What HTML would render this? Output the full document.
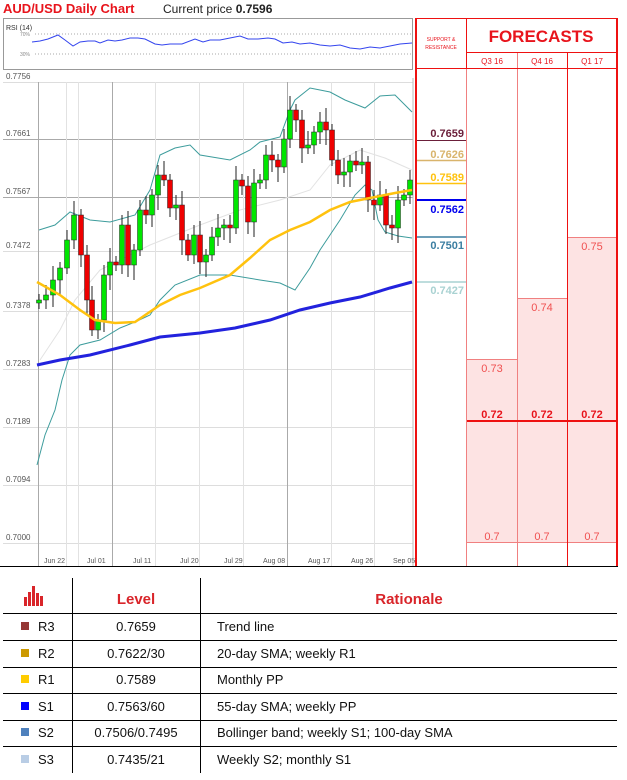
<!DOCTYPE html>
<html><head><meta charset="utf-8"><style>
body{margin:0;width:627px;height:780px;background:#fff;font-family:"Liberation Sans",sans-serif;position:relative;overflow:hidden}
.a{position:absolute}
.t{font-size:11px;color:#333}
</style></head><body>
<div class="a" style="left:3px;top:1px;font-size:13px;font-weight:bold;color:#e8141c">AUD/USD Daily Chart</div>
<div class="a" style="left:163px;top:2px;font-size:12px;color:#222">Current price <b>0.7596</b></div>
<svg class="a" style="left:0;top:0" width="627" height="780" id="s">
<!-- RSI box -->
<rect x="3.5" y="18.5" width="409" height="51" fill="#fff" stroke="#999"/>
<text x="6" y="30" font-size="7" fill="#333">RSI (14)</text>
<line x1="35" y1="34" x2="412" y2="34" stroke="#aaa" stroke-dasharray="1,2"/>
<line x1="35" y1="54" x2="412" y2="54" stroke="#aaa" stroke-dasharray="1,2"/>
<text x="20" y="36" font-size="5" fill="#888">70%</text><text x="20" y="56" font-size="5" fill="#888">30%</text>
<polyline fill="none" stroke="#3344ee" stroke-width="1" points="32,42 40,41 48,39 58,35 65,40 73,46 80,42 88,41 95,41 100,43 108,40 115,41 122,40 130,38 138,38 145,39 155,44 162,45 170,44 182,44 195,39 203,42 210,40 220,40 230,38 240,36 248,39 258,39 268,38 275,39 283,43 292,42 300,44 310,43 320,45 330,46 340,45 350,48 360,49 370,47 380,48 390,46 400,44 412,43"/>
<!-- price grid -->
<g stroke="#ccc" stroke-width="1" id="grid"></g>
<g font-size="8" fill="#555" id="plab"></g>
<g font-size="7" fill="#555">
<text x="44" y="563">Jun 22</text><text x="87" y="563">Jul 01</text><text x="133" y="563">Jul 11</text><text x="180" y="563">Jul 20</text><text x="224" y="563">Jul 29</text><text x="263" y="563">Aug 08</text><text x="308" y="563">Aug 17</text><text x="351" y="563">Aug 26</text><text x="393" y="563">Sep 05</text></g>
<line x1="413" y1="78" x2="413" y2="566" stroke="#bbb"/>
<polyline fill="none" stroke="#e2e2e2" stroke-width="1" points="40,360 60,330 75,300 100,270 150,245 200,225 240,210 280,200 310,190 330,165 360,150 385,158 412,170"/>
<polyline fill="none" stroke="#3d9c9c" stroke-width="1" points="39,230 55,225 70,212 90,220 110,222 135,215 150,190 160,155 175,148 190,145 200,155 230,160 250,150 260,142 280,137 290,110 295,100 310,88 320,90 330,92 345,100 365,108 380,96 395,95 405,105 412,112"/>
<polyline fill="none" stroke="#3d9c9c" stroke-width="1" points="37,465 45,435 55,410 62,380 70,355 80,345 100,340 120,328 135,322 150,315 160,300 175,285 200,275 230,275 260,280 280,283 295,290 310,268 320,250 340,220 355,195 365,185 372,190 378,220 385,232 398,236 412,238"/>
<g id="cd"></g>
<polyline fill="none" stroke="#ffc20e" stroke-width="2.5" points="37,282 60,295 80,310 95,320 115,323 135,322 160,305 180,295 200,288 230,275 250,258 270,240 290,230 310,222 330,210 350,202 370,198 395,193 412,190"/>
<polyline fill="none" stroke="#2222dd" stroke-width="3" points="37,365 60,360 90,355 130,345 160,337 200,333 235,328 270,320 300,310 330,303 360,297 390,288 412,282"/>
<!-- right panel -->
<rect x="467" y="359" width="50" height="184" fill="#fde3e3"/>
<rect x="517" y="298" width="50" height="245" fill="#fde3e3"/>
<rect x="567" y="237" width="50" height="306" fill="#fde3e3"/>
<g stroke="#f08080" stroke-width="1">
<line x1="466.5" y1="52" x2="466.5" y2="566"/><line x1="517.5" y1="52" x2="517.5" y2="566"/>
<line x1="467" y1="359.5" x2="517" y2="359.5"/><line x1="517" y1="298.5" x2="567" y2="298.5"/><line x1="567" y1="237.5" x2="617" y2="237.5"/>
<line x1="467" y1="542.5" x2="617" y2="542.5"/>
</g>
<g stroke="#ee1111">
<line x1="416" y1="18" x2="416" y2="566" stroke-width="2"/>
<line x1="617" y1="18" x2="617" y2="566" stroke-width="2"/>
<line x1="416" y1="18.5" x2="617" y2="18.5"/>
<line x1="466.5" y1="18" x2="466.5" y2="68"/>
<line x1="567.5" y1="52" x2="567.5" y2="566"/>
<line x1="466" y1="52.5" x2="617" y2="52.5"/>
<line x1="416" y1="68.5" x2="617" y2="68.5"/>
<line x1="467" y1="421" x2="617" y2="421" stroke-width="2"/>
</g>
<line x1="0" y1="566.5" x2="618" y2="566.5" stroke="#000"/>
<text x="441" y="41" font-size="5" fill="#e8141c" text-anchor="middle">SUPPORT &amp;</text>
<text x="441" y="49" font-size="5" fill="#e8141c" text-anchor="middle">RESISTANCE</text>
<text x="541" y="42" font-size="17" font-weight="bold" fill="#e8141c" text-anchor="middle">FORECASTS</text>
<g font-size="8" fill="#e8141c" text-anchor="middle"><text x="492" y="64">Q3 16</text><text x="542" y="64">Q4 16</text><text x="592" y="64">Q1 17</text></g>
<g font-size="11" fill="#f05050" text-anchor="middle">
<text x="492" y="372">0.73</text><text x="542" y="311">0.74</text><text x="592" y="250">0.75</text>
<text x="492" y="540">0.7</text><text x="542" y="540">0.7</text><text x="592" y="540">0.7</text></g>
<g font-size="11" font-weight="bold" fill="#e8141c" text-anchor="middle"><text x="492" y="418">0.72</text><text x="542" y="418">0.72</text><text x="592" y="418">0.72</text></g>
<g font-size="11" font-weight="bold" text-anchor="end">
<line x1="417" y1="140.5" x2="466" y2="140.5" stroke="#6b1f3a"/><text x="464" y="137" fill="#6b1f3a">0.7659</text>
<line x1="417" y1="160.5" x2="466" y2="160.5" stroke="#d9b46c" stroke-width="1.5"/><text x="464" y="158" fill="#d9b46c">0.7626</text>
<line x1="417" y1="183.5" x2="466" y2="183.5" stroke="#ffc20e" stroke-width="1.5"/><text x="464" y="181" fill="#ffc20e">0.7589</text>
<line x1="417" y1="200" x2="466" y2="200" stroke="#0000ee" stroke-width="2"/><text x="464" y="213" fill="#0000ee">0.7562</text>
<line x1="417" y1="237" x2="466" y2="237" stroke="#3b7ea1" stroke-width="1.5"/><text x="464" y="249" fill="#3b7ea1">0.7501</text>
<line x1="417" y1="282" x2="466" y2="282" stroke="#a9d2d2" stroke-width="1.5"/><text x="464" y="294" fill="#a9d2d2">0.7427</text>
</g>
<!-- table -->
<g stroke="#000" stroke-width="1">
<line x1="72.5" y1="578" x2="72.5" y2="773"/><line x1="200.5" y1="578" x2="200.5" y2="773"/>
<line x1="3" y1="613.5" x2="617" y2="613.5"/><line x1="3" y1="640.5" x2="617" y2="640.5"/><line x1="3" y1="667.5" x2="617" y2="667.5"/><line x1="3" y1="693.5" x2="617" y2="693.5"/><line x1="3" y1="720.5" x2="617" y2="720.5"/><line x1="3" y1="746.5" x2="617" y2="746.5"/>
</g>
<g fill="#d9252a"><rect x="24" y="597" width="3" height="9"/><rect x="28" y="592" width="3" height="14"/><rect x="32" y="586" width="3" height="20"/><rect x="36" y="593" width="3" height="13"/><rect x="40" y="596" width="3" height="10"/></g>
<g font-size="15" font-weight="bold" fill="#d9252a" text-anchor="middle"><text x="136" y="604">Level</text><text x="409" y="604">Rationale</text></g>
<g font-size="13" fill="#111">
<rect x="21" y="622" width="8" height="8" fill="#953735"/><text x="38" y="631">R3</text><text x="136" y="631" text-anchor="middle">0.7659</text><text x="217" y="631">Trend line</text>
<rect x="21" y="649" width="8" height="8" fill="#cc9900"/><text x="38" y="658">R2</text><text x="136" y="658" text-anchor="middle">0.7622/30</text><text x="217" y="658">20-day SMA; weekly R1</text>
<rect x="21" y="675" width="8" height="8" fill="#ffcc00"/><text x="38" y="684">R1</text><text x="136" y="684" text-anchor="middle">0.7589</text><text x="217" y="684">Monthly PP</text>
<rect x="21" y="702" width="8" height="8" fill="#0000ff"/><text x="38" y="711">S1</text><text x="136" y="711" text-anchor="middle">0.7563/60</text><text x="217" y="711">55-day SMA; weekly PP</text>
<rect x="21" y="728" width="8" height="8" fill="#4f81bd"/><text x="38" y="737">S2</text><text x="136" y="737" text-anchor="middle">0.7506/0.7495</text><text x="217" y="737">Bollinger band; weekly S1; 100-day SMA</text>
<rect x="21" y="755" width="8" height="8" fill="#b9cde5"/><text x="38" y="764">S3</text><text x="136" y="764" text-anchor="middle">0.7435/21</text><text x="217" y="764">Weekly S2; monthly S1</text>
</g>
</svg>
<script>
var NS="http://www.w3.org/2000/svg";
function el(p,t,a){var e=document.createElementNS(NS,t);for(var k in a)e.setAttribute(k,a[k]);document.getElementById(p).appendChild(e);return e;}
var ys=[82,139,197,251,311,369,427,485,543],lb=["0.7756","0.7661","0.7567","0.7472","0.7378","0.7283","0.7189","0.7094","0.7000"];
ys.forEach(function(y,i){el("grid","line",{x1:3,y1:y+.5,x2:413,y2:y+.5,stroke:i==1||i==2?"#aaa":"#ddd"});var t=el("plab","text",{x:6,y:y-3});t.textContent=lb[i];});
[38,66,78,112,155,199,243,287,331,374].forEach(function(x,i){el("grid","line",{x1:x+.5,y1:82,x2:x+.5,y2:566,stroke:(x==287||x==112||x==38)?"#aaa":"#e2e2e2"});});
var c=[[39,300],[46,295],[53,280],[60,268],[67,240],[74,215],[81,255],[87,300],[92,330],[98,320],[104,275],[110,262],[116,265],[122,225],[128,265],[134,250],[140,210],[146,215],[152,195],[158,175],[164,180],[170,208],[176,205],[182,240],[188,255],[194,235],[200,262],[206,255],[212,237],[218,228],[224,225],[230,228],[236,180],[242,186],[248,222],[254,183],[260,180],[266,155],[272,160],[278,167],[284,139],[290,110],[296,120],[302,148],[308,145],[314,132],[320,122],[326,130],[332,160],[338,175],[344,172],[350,161],[356,165],[362,162],[368,200],[374,205],[380,195],[386,225],[392,228],[398,200],[404,195],[410,180]];
var prev=303;c.forEach(function(d,i){var o=prev,cl=d[1];var top=Math.min(o,cl),bot=Math.max(o,cl);var h=Math.max(bot-top,1);
el("cd","line",{x1:d[0],y1:top-6-(i%3)*4,x2:d[0],y2:bot+6+(i%4)*3,stroke:"#222"});
el("cd","rect",{x:d[0]-2.5,y:top,width:5,height:h,fill:cl<o?"#00e600":"#ee0000",stroke:"#222","stroke-width":0.5});prev=cl;});
</script>
</body></html>
